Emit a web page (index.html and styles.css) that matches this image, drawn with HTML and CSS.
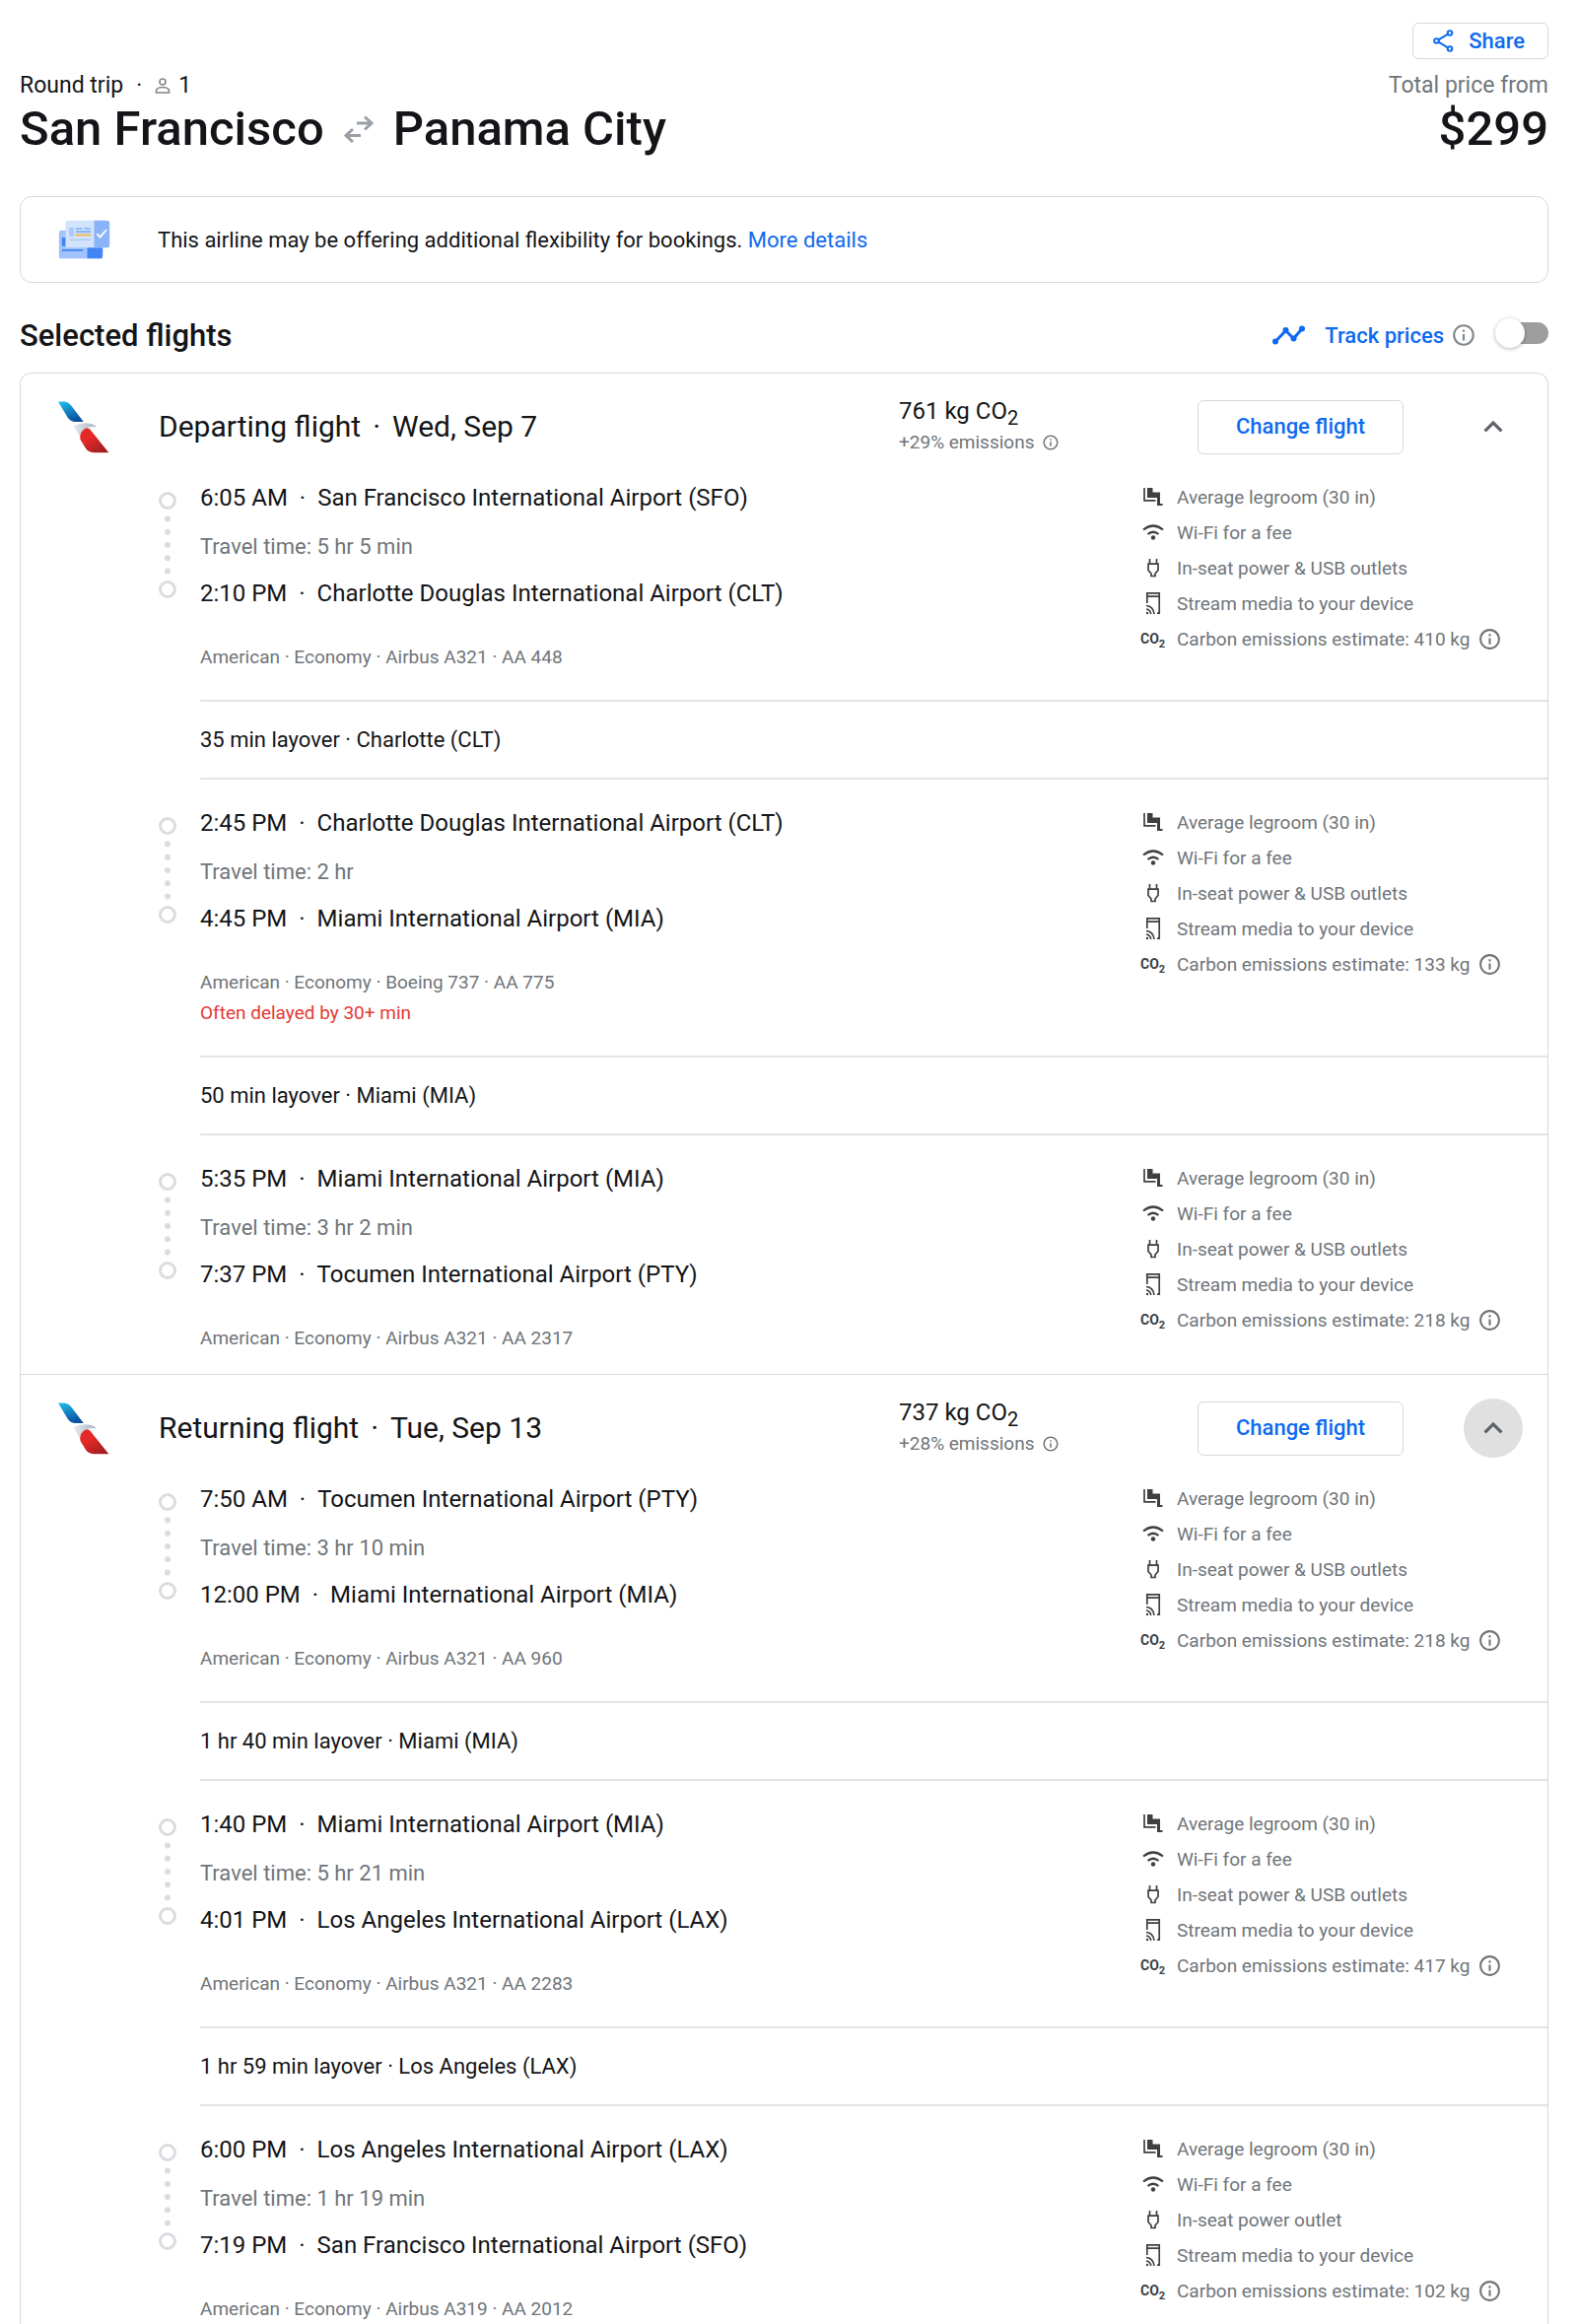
FILE: index.html
```html
<!DOCTYPE html>
<html lang="en">
<head>
<meta charset="utf-8">
<meta name="viewport" content="width=device-width, initial-scale=1">
<title>San Francisco to Panama City</title>
<link rel="stylesheet" href="styles.css">
</head>
<body>
<svg class="sprite" aria-hidden="true">
  <linearGradient id="blue" x1="0" y1="0" x2="0.4" y2="1"><stop offset="0" stop-color="#1fc1ee"/><stop offset="1" stop-color="#0b539e"/></linearGradient>
  <linearGradient id="red" x1="0.2" y1="0" x2="1" y2="1"><stop offset="0.3" stop-color="#e32a26"/><stop offset="1" stop-color="#961a1f"/></linearGradient>
  <linearGradient id="grey" x1="0" y1="0" x2="1" y2="0"><stop offset="0" stop-color="#e6ebef"/><stop offset="1" stop-color="#a9b5bf"/></linearGradient>
  <symbol id="airline" viewBox="172 106 160 162">
    <path fill="url(#blue)" d="M175 110h20q12 2 20 12l38 50h-28q-12-1-20-12z"/>
    <path fill="url(#grey)" d="M222 184q15-8 35-8 25 0 36 12-15-2-25 1-20 5-27 27-10-15-19-32z"/>
    <path fill="url(#red)" d="M262 191l9 2 59 73h-46q-17-1-24-12l-17-28q-3-8 0-14 5-17 19-21z"/>
  </symbol>
  <symbol id="info" viewBox="0 0 24 24"><path d="M11 7h2v2h-2zm0 4h2v6h-2zm1-9C6.48 2 2 6.48 2 12s4.48 10 10 10 10-4.480 10-10S17.520 2 12 2zm0 18c-4.410 0-8-3.590-8-8s3.590-8 8-8 8 3.590 8 8-3.590 8-8 8z"/></symbol>
  <symbol id="chevron" viewBox="0 0 24 24"><path d="M12 8l-6 6 1.410 1.410L12 10.830l4.590 4.580L18 14z"/></symbol>
  <symbol id="track" viewBox="0 0 18 108">
    <g fill="none" stroke="#dadce0" stroke-width="3"><circle cx="9" cy="9" r="7.500"/><circle cx="9" cy="99" r="7.500"/></g>
    <g fill="#dadce0"><circle cx="9" cy="27.500" r="3"/><circle cx="9" cy="40.700" r="3"/><circle cx="9" cy="54" r="3"/><circle cx="9" cy="67.200" r="3"/><circle cx="9" cy="80.500" r="3"/></g>
  </symbol>
  <symbol id="legroom" viewBox="-3 -4 26 26">
    <path d="M4 0h5.500v4.500H17V16h2.500v2H14v-8H4z"/><path fill="none" stroke="currentColor" stroke-width="1.700" d="M1 0v12.800h11.500"/>
  </symbol>
  <symbol id="wifi" viewBox="0 0 26 26">
    <g fill="none" stroke="currentColor" stroke-width="2.200"><path d="M3 10.500q10-8 20 0M7.500 15q5.500-4.500 11 0"/></g><circle cx="13" cy="18.500" r="2.200"/>
  </symbol>
  <symbol id="power" viewBox="0 0 26 26">
    <g fill="none" stroke="currentColor" stroke-width="1.700"><path d="M9.500 4v5M16.500 4v5M8 9.200h10v6.300l-3 3.500v2.500h-4V19l-3-3.500z"/></g>
  </symbol>
  <symbol id="stream" viewBox="0 0 26 26">
    <g fill="none" stroke="currentColor" stroke-width="1.700"><path d="M6.800 13V2.800h12.400v20.400H17M7 6.200h12M6 15.500q7 .5 8 8.500M6 19q4 .5 4.800 5"/></g><circle cx="7" cy="23" r="1.200"/>
  </symbol>
</svg>

<main class="page">
  <header class="trip">
    <div class="trip-actions">
      <button class="button share" type="button">
        <svg viewBox="0 0 21 23" width="21" height="23" fill="none" stroke="currentColor" stroke-width="2" aria-hidden="true"><circle cx="3.500" cy="11.500" r="2.300"/><circle cx="17" cy="3.500" r="2.300"/><circle cx="17" cy="19.500" r="2.300"/><path d="M5.500 10.300L15 4.700M5.500 12.700L15 18.300"/></svg>
        Share
      </button>
    </div>
    <div class="trip-row">
      <div class="trip-kind"><span>Round trip</span><span>·</span>
        <span class="passengers"><svg viewBox="0 0 16 16" width="16" height="16" fill="none" stroke="#80868b" stroke-width="1.600" aria-hidden="true"><circle cx="8" cy="4" r="3"/><path d="M1.500 15v-2.500C2.500 9.800 5.500 9.500 8 9.500s5.500.3 6.500 3V15z"/></svg>1</span>
      </div>
      <div class="price-label">Total price from</div>
    </div>
    <div class="trip-row">
      <h1 class="route">San Francisco
        <svg viewBox="0 0 30 36" width="30" height="36" fill="none" stroke="#9aa0a6" stroke-width="3" aria-hidden="true"><path d="M13 12h14M21 5.500l7 6.500-7 6.500M17 24.500H3M9 18l-7 6.500L9 31"/></svg>
        Panama City</h1>
      <div class="price">$299</div>
    </div>
  </header>

  <section class="banner">
    <svg class="banner-art" viewBox="56 68 158 120" width="53" height="40" aria-hidden="true">
      <rect x="58" y="100" width="133" height="86" rx="8" fill="#a1c2fa"/><path fill="#4285f4" d="M144 140h47v38q0 8-8 8h-39zM67 122h12v26H67zM67 158h64v5H67z"/>
      <rect x="78" y="70" width="134" height="83" rx="8" fill="#d2e3fc"/><path fill="#8ab4f8" d="M165 70h39q8 0 8 8v67q0 8-8 8h-39z"/><path fill="#a8c7fa" d="M89 92h14v26H89zM89 127h66v4H89z"/><path fill="#8ab4f8" d="M109 92h20v5h-20zM135 92h19v5h-19zM109 101h46v7h-46z"/>
      <path fill="#fbb33c" d="M108 112h48v5h-48z"/><path fill="none" stroke="#fff" stroke-width="5" d="M173 110l10 11 20-23"/>
    </svg>
    <p>This airline may be offering additional flexibility for bookings. <a href="#details">More details</a></p>
  </section>

  <div class="selected">
    <h2>Selected flights</h2>
    <div class="tracker">
      <svg viewBox="0 0 33 20" width="33" height="20" fill="none" stroke="currentColor" stroke-width="3" stroke-linejoin="round" aria-hidden="true"><path d="M3 16.500L13.500 5.500l8 8L30 3.500"/><g fill="currentColor" stroke="none"><circle cx="3" cy="16.500" r="3"/><circle cx="13.500" cy="5" r="3"/><circle cx="21.500" cy="13.500" r="3"/><circle cx="30" cy="3.500" r="3"/></g></svg>
      <label for="track-prices">Track prices</label>
      <svg class="info-large"><use href="#info"/></svg>
      <input class="toggle" id="track-prices" type="checkbox" role="switch">
    </div>
  </div>

  <section class="flights" id="details">
    <article class="flight">
      <header class="flight-head">
        <svg class="airline" aria-hidden="true"><use href="#airline"/></svg>
        <h3>Departing flight<span class="dot">·</span>Wed, Sep 7</h3>
        <div class="co2"><div class="co2-total">761 kg CO<sub>2</sub></div><div class="co2-diff">+29% emissions <svg class="info-small"><use href="#info"/></svg></div></div>
        <button class="button change" type="button">Change flight</button>
        <button class="collapse" type="button" aria-label="Collapse departing flight"><svg><use href="#chevron"/></svg></button>
      </header>

      <div class="segment">
        <svg class="track"><use href="#track"/></svg>
        <div class="leg">
          <div class="stop">6:05 AM<span class="dot">·</span>San Francisco International Airport (SFO)</div>
          <div class="duration">Travel time: 5 hr 5 min</div>
          <div class="stop">2:10 PM<span class="dot">·</span>Charlotte Douglas International Airport (CLT)</div>
          <div class="aircraft">American · Economy · Airbus A321 · AA 448</div>
        </div>
        <ul class="amenities">
          <li><svg><use href="#legroom"/></svg>Average legroom (30 in)</li>
          <li><svg><use href="#wifi"/></svg>Wi-Fi for a fee</li>
          <li><svg><use href="#power"/></svg>In-seat power &amp; USB outlets</li>
          <li><svg><use href="#stream"/></svg>Stream media to your device</li>
          <li><span class="co2-icon">CO<sub>2</sub></span>Carbon emissions estimate: 410 kg <svg class="info-medium"><use href="#info"/></svg></li>
        </ul>
      </div>
      <div class="layover">35 min layover · Charlotte (CLT)</div>
      <div class="segment">
        <svg class="track"><use href="#track"/></svg>
        <div class="leg">
          <div class="stop">2:45 PM<span class="dot">·</span>Charlotte Douglas International Airport (CLT)</div>
          <div class="duration">Travel time: 2 hr</div>
          <div class="stop">4:45 PM<span class="dot">·</span>Miami International Airport (MIA)</div>
          <div class="aircraft">American · Economy · Boeing 737 · AA 775</div>
          <div class="delay">Often delayed by 30+ min</div>
        </div>
        <ul class="amenities">
          <li><svg><use href="#legroom"/></svg>Average legroom (30 in)</li>
          <li><svg><use href="#wifi"/></svg>Wi-Fi for a fee</li>
          <li><svg><use href="#power"/></svg>In-seat power &amp; USB outlets</li>
          <li><svg><use href="#stream"/></svg>Stream media to your device</li>
          <li><span class="co2-icon">CO<sub>2</sub></span>Carbon emissions estimate: 133 kg <svg class="info-medium"><use href="#info"/></svg></li>
        </ul>
      </div>
      <div class="layover">50 min layover · Miami (MIA)</div>
      <div class="segment">
        <svg class="track"><use href="#track"/></svg>
        <div class="leg">
          <div class="stop">5:35 PM<span class="dot">·</span>Miami International Airport (MIA)</div>
          <div class="duration">Travel time: 3 hr 2 min</div>
          <div class="stop">7:37 PM<span class="dot">·</span>Tocumen International Airport (PTY)</div>
          <div class="aircraft">American · Economy · Airbus A321 · AA 2317</div>
        </div>
        <ul class="amenities">
          <li><svg><use href="#legroom"/></svg>Average legroom (30 in)</li>
          <li><svg><use href="#wifi"/></svg>Wi-Fi for a fee</li>
          <li><svg><use href="#power"/></svg>In-seat power &amp; USB outlets</li>
          <li><svg><use href="#stream"/></svg>Stream media to your device</li>
          <li><span class="co2-icon">CO<sub>2</sub></span>Carbon emissions estimate: 218 kg <svg class="info-medium"><use href="#info"/></svg></li>
        </ul>
      </div>
    </article>

    <article class="flight">
      <header class="flight-head">
        <svg class="airline" aria-hidden="true"><use href="#airline"/></svg>
        <h3>Returning flight<span class="dot">·</span>Tue, Sep 13</h3>
        <div class="co2"><div class="co2-total">737 kg CO<sub>2</sub></div><div class="co2-diff">+28% emissions <svg class="info-small"><use href="#info"/></svg></div></div>
        <button class="button change" type="button">Change flight</button>
        <button class="collapse is-active" type="button" aria-label="Collapse returning flight"><svg><use href="#chevron"/></svg></button>
      </header>

      <div class="segment">
        <svg class="track"><use href="#track"/></svg>
        <div class="leg">
          <div class="stop">7:50 AM<span class="dot">·</span>Tocumen International Airport (PTY)</div>
          <div class="duration">Travel time: 3 hr 10 min</div>
          <div class="stop">12:00 PM<span class="dot">·</span>Miami International Airport (MIA)</div>
          <div class="aircraft">American · Economy · Airbus A321 · AA 960</div>
        </div>
        <ul class="amenities">
          <li><svg><use href="#legroom"/></svg>Average legroom (30 in)</li>
          <li><svg><use href="#wifi"/></svg>Wi-Fi for a fee</li>
          <li><svg><use href="#power"/></svg>In-seat power &amp; USB outlets</li>
          <li><svg><use href="#stream"/></svg>Stream media to your device</li>
          <li><span class="co2-icon">CO<sub>2</sub></span>Carbon emissions estimate: 218 kg <svg class="info-medium"><use href="#info"/></svg></li>
        </ul>
      </div>
      <div class="layover">1 hr 40 min layover · Miami (MIA)</div>
      <div class="segment">
        <svg class="track"><use href="#track"/></svg>
        <div class="leg">
          <div class="stop">1:40 PM<span class="dot">·</span>Miami International Airport (MIA)</div>
          <div class="duration">Travel time: 5 hr 21 min</div>
          <div class="stop">4:01 PM<span class="dot">·</span>Los Angeles International Airport (LAX)</div>
          <div class="aircraft">American · Economy · Airbus A321 · AA 2283</div>
        </div>
        <ul class="amenities">
          <li><svg><use href="#legroom"/></svg>Average legroom (30 in)</li>
          <li><svg><use href="#wifi"/></svg>Wi-Fi for a fee</li>
          <li><svg><use href="#power"/></svg>In-seat power &amp; USB outlets</li>
          <li><svg><use href="#stream"/></svg>Stream media to your device</li>
          <li><span class="co2-icon">CO<sub>2</sub></span>Carbon emissions estimate: 417 kg <svg class="info-medium"><use href="#info"/></svg></li>
        </ul>
      </div>
      <div class="layover">1 hr 59 min layover · Los Angeles (LAX)</div>
      <div class="segment">
        <svg class="track"><use href="#track"/></svg>
        <div class="leg">
          <div class="stop">6:00 PM<span class="dot">·</span>Los Angeles International Airport (LAX)</div>
          <div class="duration">Travel time: 1 hr 19 min</div>
          <div class="stop">7:19 PM<span class="dot">·</span>San Francisco International Airport (SFO)</div>
          <div class="aircraft">American · Economy · Airbus A319 · AA 2012</div>
        </div>
        <ul class="amenities">
          <li><svg><use href="#legroom"/></svg>Average legroom (30 in)</li>
          <li><svg><use href="#wifi"/></svg>Wi-Fi for a fee</li>
          <li><svg><use href="#power"/></svg>In-seat power outlet</li>
          <li><svg><use href="#stream"/></svg>Stream media to your device</li>
          <li><span class="co2-icon">CO<sub>2</sub></span>Carbon emissions estimate: 102 kg <svg class="info-medium"><use href="#info"/></svg></li>
        </ul>
      </div>
    </article>
  </section>
</main>
</body>
</html>
```

FILE: styles.css
```css
*,
*::before,
*::after {
  box-sizing: border-box;
}

body {
  margin: 0;
  background: #fff;
  color: #141518;
  font-family: Roboto, "Liberation Sans", sans-serif;
  font-size: 22px;
}

h1, h2, h3, p, ul {
  margin: 0;
  padding: 0;
}

svg {
  display: block;
  flex: none;
  fill: currentColor;
}

svg[fill="none"] {
  fill: none;
}

.sprite {
  position: absolute;
  width: 0;
  height: 0;
}

.page {
  padding: 23px 29px 0 20px;
}

.button {
  border: 1px solid #d5d8de;
  border-radius: 6px;
  background: #fff;
  color: #0f6af0;
  font: 500 22px/30px Roboto, "Liberation Sans", sans-serif;
}

/* Trip summary */
.trip-actions {
  display: flex;
  justify-content: flex-end;
}

.share {
  display: flex;
  align-items: center;
  gap: 15px;
  height: 37px;
  padding: 0 23px 0 20px;
}

.trip-row {
  display: flex;
  justify-content: space-between;
  align-items: center;
}

.trip-kind {
  display: flex;
  gap: 13px;
  font-size: 23px;
  line-height: 30px;
}

.trip-actions + .trip-row,
.trip-actions {
  margin-bottom: 0;
}

.trip-actions {
  padding-bottom: 12px;
}

.passengers {
  display: flex;
  align-items: center;
  gap: 8px;
}

.price-label {
  color: #70757a;
  font-size: 23px;
  line-height: 30px;
}

.route,
.price {
  font-size: 49px;
  font-weight: 500;
  line-height: 57px;
}

.route {
  display: flex;
  align-items: center;
  gap: 20px;
}

.banner {
  display: flex;
  align-items: center;
  gap: 48px;
  height: 88px;
  margin-top: 40px;
  padding-left: 38px;
  border: 1px solid #d5d8de;
  border-radius: 12px;
}

.banner a {
  color: #0f6af0;
  text-decoration: none;
}

.selected {
  display: flex;
  justify-content: space-between;
  align-items: center;
  height: 91px;
  padding-top: 15px;
}

.selected h2 {
  font-size: 31px;
  font-weight: 500;
}

.tracker {
  display: flex;
  align-items: center;
  color: #0f6af0;
  font-weight: 500;
}

.tracker label {
  margin: 0 7px 0 20px;
}

.info-large {
  width: 26px;
  height: 26px;
  color: #80868b;
}

.toggle {
  position: relative;
  width: 51px;
  height: 22px;
  margin: 0 0 4px 22px;
  appearance: none;
  background: linear-gradient(#9e9e9e, #9e9e9e) right / 44px 22px no-repeat;
  border-radius: 11px;
}

.toggle::before {
  content: "";
  position: absolute;
  top: -4px;
  left: -3px;
  width: 30px;
  height: 30px;
  border-radius: 50%;
  background: #fff;
  box-shadow: 0 1px 4px rgba(0, 0, 0, 0.3);
}

/* Flight cards */
.flights {
  border: 1px solid #d5d8de;
  border-bottom: 0;
  border-radius: 12px 12px 0 0;
}

.flight + .flight {
  border-top: 1px solid #d5d8de;
}

.flight-head {
  display: grid;
  grid-template-columns: 103px 1fr 303px 209px 121px;
  align-items: center;
  height: 84px;
  padding: 22px 25px 0 37px;
}

.airline {
  width: 53px;
  height: 54px;
}

.flight-head h3 {
  font-size: 30px;
  font-weight: 400;
  line-height: 36px;
}

.dot {
  margin: 0 12px;
}

.co2-total {
  font-size: 24px;
  line-height: 32px;
}

.co2-total sub {
  font-size: 20px;
  line-height: 0;
}

.co2-diff {
  display: flex;
  align-items: center;
  gap: 7px;
  color: #70757a;
  font-size: 19px;
  line-height: 32px;
}

.info-small {
  width: 18px;
  height: 18px;
}

.change {
  height: 55px;
}

.collapse {
  display: grid;
  place-items: center;
  width: 60px;
  height: 60px;
  margin-left: 61px;
  padding: 0;
  border: 0;
  border-radius: 50%;
  background: none;
  color: #5f6368;
}

.collapse.is-active {
  background: #e0e0e0;
}

.collapse svg {
  width: 38px;
  height: 38px;
}

.segment {
  display: grid;
  grid-template-columns: 18px 1fr 413px;
  column-gap: 24px;
  padding: 26px 0 28px 140px;
}

.flight-head + .segment {
  padding-top: 24px;
}

.flight .segment:last-child {
  padding-bottom: 21px;
}

.flight:last-child .segment:last-child {
  padding-bottom: 0;
}

.track {
  width: 18px;
  height: 108px;
  margin-top: 12px;
}

.stop {
  font-size: 24px;
  line-height: 36px;
}

.duration {
  margin: 18px 0 15px;
  color: #70757a;
  line-height: 28px;
}

.aircraft,
.delay {
  color: #70757a;
  font-size: 19px;
  line-height: 31px;
}

.aircraft {
  margin-top: 31px;
}

.delay {
  color: #e53935;
}

.amenities {
  margin-top: -1px;
  list-style: none;
  color: #70757a;
  font-size: 19px;
}

.amenities li {
  display: flex;
  align-items: center;
  gap: 11px;
  height: 36px;
  white-space: nowrap;
}

.amenities svg {
  width: 26px;
  height: 26px;
  color: #3c4043;
}

.amenities .info-medium {
  width: 25px;
  height: 25px;
  margin-left: -3px;
  color: #70757a;
}

.co2-icon {
  width: 26px;
  color: #3c4043;
  font-size: 14px;
  font-weight: 700;
}

.co2-icon sub {
  font-size: 11px;
  line-height: 0;
}

.layover {
  margin-left: 182px;
  padding: 24px 0;
  border: solid #e1e3e7;
  border-width: 2px 0;
  line-height: 29px;
}
```
